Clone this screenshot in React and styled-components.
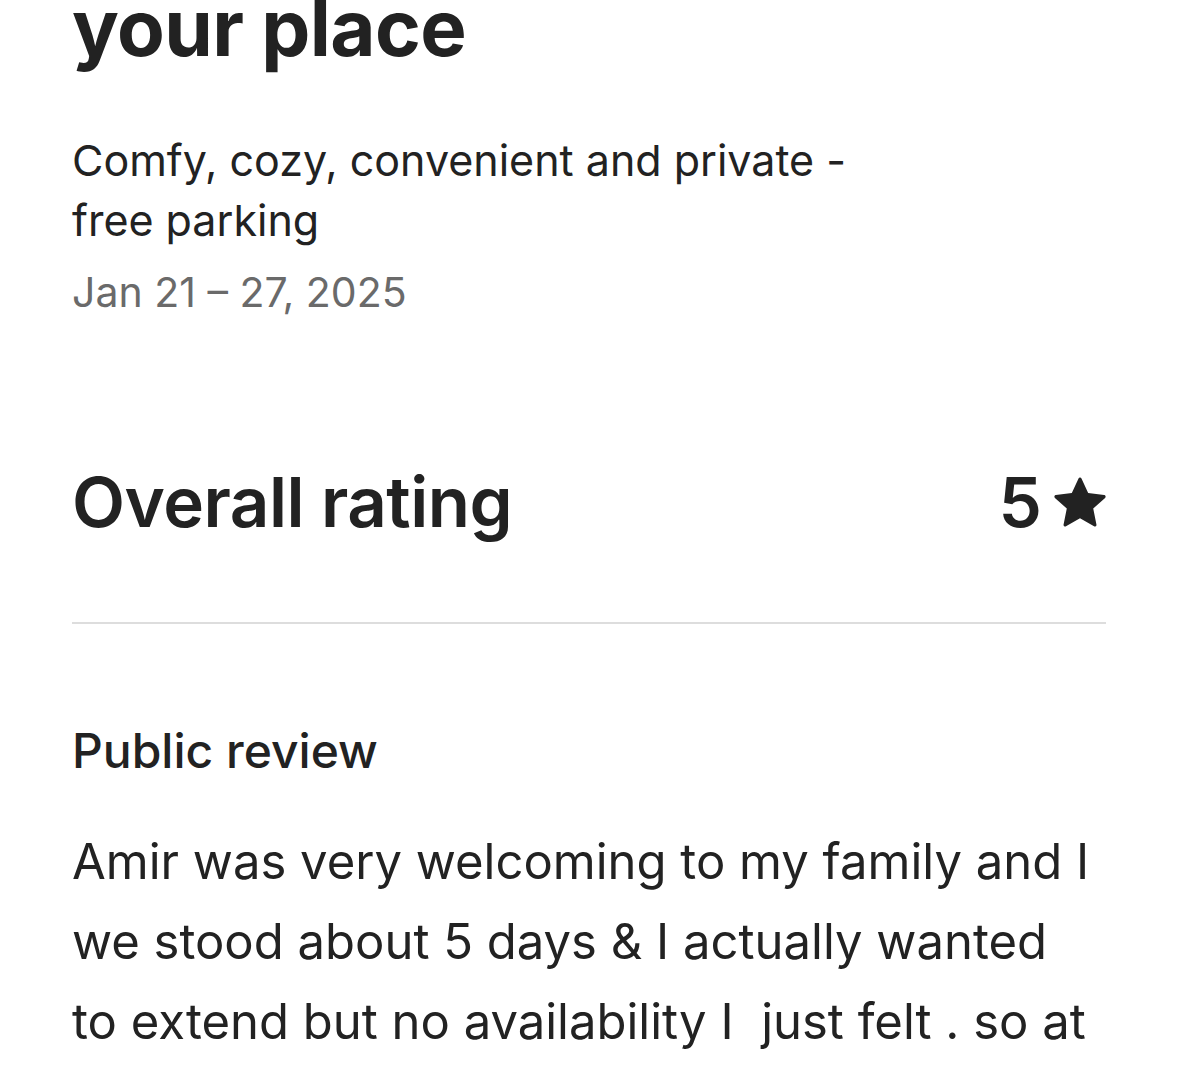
import React from "react";
import styled, { createGlobalStyle } from "styled-components";

const Global = createGlobalStyle`
  html, body { margin: 0; padding: 0; background: #fff; }
  body { font-family: Inter, "Noto Sans", sans-serif; color: #222; }
`;

const Page = styled.main`
  width: 1179px;
  height: 1080px;
  overflow: hidden;
  box-sizing: border-box;
  padding: 0 73px 0 72px;
  background: #fff;
`;

const Title = styled.h1`
  margin: -20px 0 0;
  font-size: 78px;
  font-weight: 700;
  line-height: 96px;
  letter-spacing: -0.6px;
  color: #222;
`;

const ListingName = styled.p`
  margin: 54px 0 0;
  font-size: 43px;
  font-weight: 400;
  line-height: 60px;
  color: #222;
  max-width: 800px;
`;

const Dates = styled.p`
  margin: 12px 0 0;
  font-size: 41px;
  line-height: 60px;
  color: #6a6a6a;
`;

const RatingRow = styled.section`
  margin-top: 138px;
  display: flex;
  align-items: center;
  justify-content: space-between;
  padding-bottom: 78px;
  border-bottom: 2px solid #dddddd;
`;

const RatingLabel = styled.h2`
  margin: 0;
  font-size: 69px;
  font-weight: 600;
  line-height: 84px;
  letter-spacing: -0.5px;
`;

const Score = styled.div`
  display: flex;
  align-items: center;
  gap: 12px;
  font-size: 69px;
  font-weight: 600;
  line-height: 84px;
`;

const Section = styled.section`
  padding-top: 97px;
`;

const SectionTitle = styled.h3`
  margin: 0;
  font-size: 48px;
  font-weight: 500;
  line-height: 60px;
`;

const Body = styled.p`
  margin: 41px 0 0;
  font-size: 49px;
  font-weight: 400;
  line-height: 80px;
  white-space: pre-wrap;
`;

const Star = () => (
  <svg width="52" height="52" viewBox="0 0 32 32" aria-hidden="true">
    <path
      fill="#222"
      d="M15.1 1.58l-4.13 8.88-9.86 1.27a1 1 0 0 0-.54 1.74l7.3 6.57-1.97 9.85a1 1 0 0 0 1.48 1.06l8.62-5 8.63 5a1 1 0 0 0 1.48-1.06l-1.97-9.850 7.3-6.57a1 1 0 0 0-.55-1.73l-9.86-1.28-4.12-8.88a1 1 0 0 0-1.82 0z"
    />
  </svg>
);

export default function App() {
  return (
    <>
      <Global />
      <Page>
        <Title>your place</Title>
        <ListingName>Comfy, cozy, convenient and private - free parking</ListingName>
        <Dates>Jan 21 – 27, 2025</Dates>
        <RatingRow>
          <RatingLabel>Overall rating</RatingLabel>
          <Score>
            5<Star />
          </Score>
        </RatingRow>
        <Section>
          <SectionTitle>Public review</SectionTitle>
          <Body>
            {"Amir was very welcoming to my family and I\nwe stood about 5 days & I actually wanted\nto extend but no availability I  just felt . so at\nthe"}
          </Body>
        </Section>
      </Page>
    </>
  );
}
